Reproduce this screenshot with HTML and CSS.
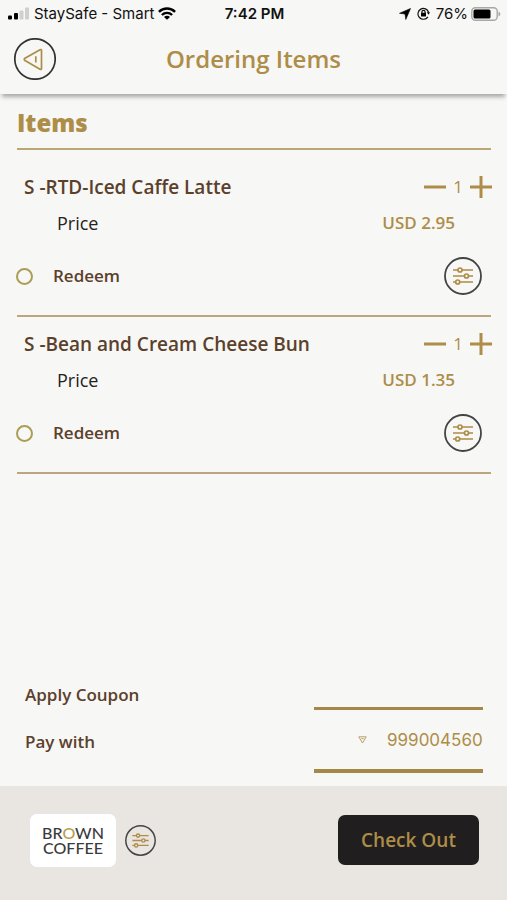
FILE: index.html
```html
<!doctype html>
<html lang="en">
<head>
<meta charset="utf-8">
<meta name="viewport" content="width=device-width, initial-scale=1">
<title>Ordering Items</title>
<link rel="stylesheet" href="styles.css">
</head>
<body>

	<svg class="symbols" aria-hidden="true">
		<symbol id="sliders" viewBox="0 0 38 38">
			<circle cx="19" cy="19" r="18" fill="none" stroke="#444" stroke-width="1.8"/>
			<g fill="none" stroke="#ad8d48" stroke-width="1.7">
				<path d="M9 13h5M18 13h11M9 19h11.500M24.500 19h4.500M9 25h2.500M16 25h13"/>
				<circle cx="16" cy="13" r="2"/>
				<circle cx="22.500" cy="19" r="2"/>
				<circle cx="13.700" cy="25" r="2"/>
			</g>
		</symbol>
	</svg>

	<div class="status">
		<div class="status-left">
			<svg width="22" height="13" viewBox="0 0 22 13">
				<rect x="0" y="8.500" width="4" height="4" rx="1"/>
				<rect x="6" y="6" width="4" height="6.500" rx="1"/>
				<rect x="11.500" y="3.500" width="4" height="9" rx="1" fill="#d0d0d0"/>
				<rect x="17" y="0.500" width="4" height="12" rx="1" fill="#d0d0d0"/>
			</svg>
			<span>StaySafe - Smart</span>
			<svg width="18" height="13" viewBox="0 0 18 13">
				<g fill="none" stroke="#000" stroke-width="2.400">
					<path d="M0.900 4.800a11.600 11.600 0 0 1 16.200 0"/>
					<path d="M3.900 8a7.300 7.300 0 0 1 10.200 0"/>
				</g>
				<path d="M9 12.800L6 9.900a4.200 4.200 0 0 1 6 0z"/>
			</svg>
		</div>
		<div class="status-time">7:42 PM</div>
		<div class="status-right">
			<svg width="12" height="12" viewBox="0 0 12 12"><path d="M11.500 0.500L6.800 11.500L6 6L0.500 5.300z" stroke="#000" stroke-width="0.600"/></svg>
			<svg width="13" height="13" viewBox="0 0 13 13">
				<g fill="none" stroke="#111" stroke-width="1.200">
					<path d="M11.600 5.500a5.400 5.400 0 1 0 -0.700 4.300"/>
					<path d="M4.900 6v-1a1.600 1.600 0 0 1 3.200 0v1"/>
				</g>
				<path d="M9.800 5.200h3.200l-1.500 2.600z"/>
				<rect x="4" y="5.800" width="5" height="3.800" rx="0.600"/>
			</svg>
			<span>76%</span>
			<svg width="30" height="14" viewBox="0 0 30 14">
				<rect x="0.800" y="0.800" width="25.400" height="12.400" rx="3.500" fill="none" stroke="#a8a8a8" stroke-width="1.400"/>
				<rect x="2.500" y="2.500" width="17" height="9" rx="1.500"/>
				<path d="M27.500 4.500a2.600 2.600 0 0 1 0 5z" fill="#a8a8a8"/>
			</svg>
		</div>
	</div>

	<header class="header">
		<button class="icon-button" aria-label="Back">
			<svg width="42" height="42" viewBox="0 0 42 42" fill="none">
				<circle cx="21" cy="21" r="20.200" stroke="#333" stroke-width="1.700"/>
				<path d="M27.500 12.500V30.500Q27.500 32 26 31.200L11 22.500Q9.500 21.400 11 20.300L26 11.700Q27.500 11 27.500 12.500zM21.800 18.200V24.600" stroke="#ad8d48" stroke-width="1.700"/>
			</svg>
		</button>
		<h1>Ordering Items</h1>
	</header>

	<main class="main">
		<h2>Items</h2>

		<ul class="items">
			<li class="item">
				<div class="item-row">
					<h3>S -RTD-Iced Caffe Latte</h3>
					<div class="stepper">
						<button class="icon-button" aria-label="Remove one"><svg width="22" height="22"><path d="M0 11H22" stroke="#ad8d48" stroke-width="3"/></svg></button>
						<span>1</span>
						<button class="icon-button" aria-label="Add one"><svg width="22" height="22"><path d="M0 11H22M11 0V22" stroke="#ad8d48" stroke-width="3"/></svg></button>
					</div>
				</div>
				<div class="item-row price">
					<span>Price</span>
					<span class="amount">USD 2.95</span>
				</div>
				<div class="item-row redeem">
					<label><input type="radio" name="redeem-latte">Redeem</label>
					<button class="icon-button" aria-label="Options"><svg width="38" height="38"><use href="#sliders"/></svg></button>
				</div>
			</li>
			<li class="item">
				<div class="item-row">
					<h3>S -Bean and Cream Cheese Bun</h3>
					<div class="stepper">
						<button class="icon-button" aria-label="Remove one"><svg width="22" height="22"><path d="M0 11H22" stroke="#ad8d48" stroke-width="3"/></svg></button>
						<span>1</span>
						<button class="icon-button" aria-label="Add one"><svg width="22" height="22"><path d="M0 11H22M11 0V22" stroke="#ad8d48" stroke-width="3"/></svg></button>
					</div>
				</div>
				<div class="item-row price">
					<span>Price</span>
					<span class="amount">USD 1.35</span>
				</div>
				<div class="item-row redeem">
					<label><input type="radio" name="redeem-bun">Redeem</label>
					<button class="icon-button" aria-label="Options"><svg width="38" height="38"><use href="#sliders"/></svg></button>
				</div>
			</li>
		</ul>
	</main>

	<form class="payment">
		<div class="field">
			<label for="coupon">Apply Coupon</label>
			<input id="coupon" class="control" type="text">
		</div>
		<div class="field">
			<label for="pay">Pay with</label>
			<div class="control pay">
				<svg width="9" height="8" viewBox="0 0 9 8" fill="none" stroke="#b9a06c"><path d="M0.800 0.800H8.200L4.500 7zM3.300 2.700H5.700" stroke-width="1"/></svg>
				<select id="pay">
					<option>999004560</option>
				</select>
			</div>
		</div>
	</form>

	<footer class="footer">
		<div class="logo">
			<div>BR<span>O</span>WN</div>
			<div>COFFEE</div>
		</div>
		<button class="icon-button" aria-label="Store options"><svg width="31" height="31"><use href="#sliders"/></svg></button>
		<button class="checkout">Check Out</button>
	</footer>

</body>
</html>
```
FILE: styles.css
```css
* { box-sizing: border-box; }

body { background: #f7f7f5; color: #5b402b; display: flex; flex-direction: column; font: 600 17px/24px "Open Sans", "Noto Sans", sans-serif; margin: 0; min-height: 100vh; }

h1, h2, h3, ul { font-weight: 600; margin: 0; padding: 0; }
svg { display: block; flex: none; }
button, input, select { font: inherit; }

.symbols { height: 0; position: absolute; width: 0; }

.icon-button { background: none; border: none; cursor: pointer; padding: 0; }

/* phone status bar */
.status { align-items: center; color: #111; display: grid; font: 15px/20px Inter, sans-serif; grid-template-columns: 1fr auto 1fr; height: 27px; padding: 0 6px 0 8px; }
.status-left, .status-right { align-items: center; display: flex; gap: 4px; }
.status-right { gap: 6px; justify-content: flex-end; }
.status-right span { margin-right: -3px; }
.status-time { font-weight: 600; }

.header { align-items: center; box-shadow: 0 5px 4px -2px #aaa; display: grid; grid-template-columns: 42px 1fr 42px; height: 67px; padding: 0 14px 3px; }
.header h1 { color: #ad8d48; font-size: 24px; line-height: 32px; text-align: center; }

.main { flex: 1; padding: 13px 16px 0 17px; }
.main h2 { border-bottom: 2px solid #bca674; color: #ad8d48; font-size: 24px; font-weight: 800; line-height: 32px; padding-bottom: 9px; }

.items { list-style: none; padding-top: 10px; }
.item { border-bottom: 2px solid #bca67c; padding: 9px 0 20px; }
.item-row { align-items: center; display: flex; height: 36px; justify-content: space-between; }
.item h3 { font-size: 19px; padding-left: 7px; }
.stepper { align-items: center; color: #ad8d48; display: flex; margin-right: -1px; }
.stepper span { font-weight: 400; text-align: center; width: 24px; }
.price { color: #222; padding: 0 36px 0 40px; }
.price span:first-child { font-size: 18px; font-weight: 400; }
.amount { color: #ad8d48; }
.redeem { height: 38px; margin-top: 16px; padding-right: 9px; }
.redeem label { align-items: center; display: flex; gap: 20px; margin-left: -1px; }
.redeem input { appearance: none; border: 2px solid #aa9e57; border-radius: 50%; height: 17px; margin: 0; width: 17px; }

.payment { padding: 0 24px 13px 25px; }
.field { align-items: center; display: flex; height: 63px; justify-content: space-between; }
.field:first-child { height: 31px; }
.control { background: none; border: 0 solid #a5874a; border-bottom-width: 3px; height: 100%; outline: none; padding: 0; width: 169px; }
.pay { align-items: center; border-bottom-width: 4px; display: flex; justify-content: flex-end; gap: 20px; }
.pay select { appearance: none; background: none; border: none; color: #ad8d48; font: 17px/24px Inter, sans-serif; outline: none; padding: 0; }

.footer { align-items: center; background: #e9e6e2; display: flex; height: 114px; padding: 0 28px 6px 30px; }
.logo { background: #fff; border-radius: 7px; color: #3c3a3c; font: 500 16px/15px Lato, sans-serif; margin-right: 9px; padding: 11px 0 12px; text-align: center; width: 86px; }
.logo span { color: #b5a04c; }
.checkout { background: #201e1f; border: none; border-radius: 7px; color: #ad8d48; cursor: pointer; font-size: 19px; height: 50px; margin-left: auto; width: 141px; }
```
